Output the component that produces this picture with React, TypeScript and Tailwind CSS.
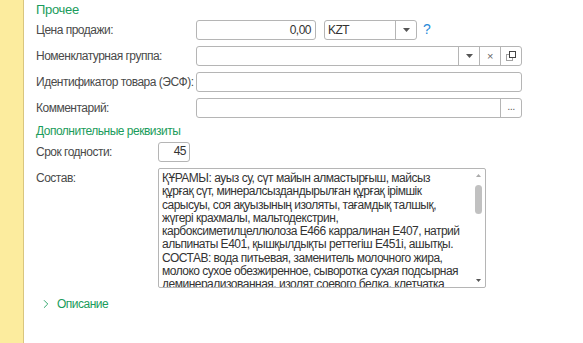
import { ChevronRight } from "lucide-react";

const font = { fontFamily: '"Liberation Sans", Arial, sans-serif' };

function DropArrow() {
  return (
    <svg width="7" height="4" viewBox="0 0 7 4">
      <path d="M0 0h7L3.5 4z" fill="#555" />
    </svg>
  );
}

function Field({ children, className = "" }: { children?: React.ReactNode; className?: string }) {
  return (
    <div className={`flex h-[20px] items-stretch rounded-[3px] border border-[#b5b5b5] bg-white text-[12px] text-[#333] ${className}`}>
      {children}
    </div>
  );
}

function Btn({ children }: { children: React.ReactNode }) {
  return (
    <div className="flex w-[21px] shrink-0 items-center justify-center border-l border-[#b5b5b5] text-[#666]">
      {children}
    </div>
  );
}

const lines = [
  "ҚҰРАМЫ: ауыз су, сүт майын алмастырғыш, майсыз",
  "құрғақ сүт, минералсыздандырылған құрғақ ірімшік",
  "сарысуы, соя ақуызының изоляты, тағамдық талшық,",
  "жүгері крахмалы, мальтодекстрин,",
  "карбоксиметилцеллюлоза Е466 карралинан Е407, натрий",
  "альпинаты Е401, қышқылдықты реттегіш Е451i, ашытқы.",
  "СОСТАВ: вода питьевая, заменитель молочного жира,",
  "молоко сухое обезжиренное, сыворотка сухая подсырная",
  "деминерализованная, изолят соевого белка, клетчатка",
];

export default function App() {
  return (
    <div style={font} className="flex h-[343px] w-[583px] overflow-hidden bg-white">
      {/* yellow side strip */}
      <div className="w-[24px] shrink-0 border-r border-[#d9c67f] bg-[#fcec9e]" />

      <div className="flex flex-1 flex-col pl-[12px] pt-[2px] text-[12px] tracking-[-0.5px] text-[#4a4a4a]">
        <div className="h-[16px] text-[13px] leading-[16px] tracking-[-0.3px] text-[#1a9c5b]">Прочее</div>

        <div className="mt-[1px] flex flex-col gap-[6px]">
          {/* Цена продажи */}
          <div className="flex items-center">
            <div className="w-[160px] shrink-0">Цена продажи:</div>
            <Field className="w-[120px] justify-end pr-[4px] leading-[18px]">0,00</Field>
            <Field className="ml-[8px] w-[93px]">
              <div className="flex-1 pl-[3px] leading-[18px]">KZT</div>
              <Btn>
                <DropArrow />
              </Btn>
            </Field>
            <span className="ml-[6px] text-[14px] text-[#2a8ad8]">?</span>
          </div>

          {/* Номенклатурная группа */}
          <div className="flex items-center">
            <div className="w-[160px] shrink-0">Номенклатурная группа:</div>
            <Field className="w-[326px]">
              <div className="flex-1" />
              <Btn>
                <DropArrow />
              </Btn>
              <Btn>
                <span className="text-[11px] leading-none">×</span>
              </Btn>
              <Btn>
                <svg width="10" height="10" viewBox="0 0 10 10" fill="none" stroke="#444" strokeWidth="1">
                  <rect x="3.5" y="0.5" width="6" height="6" />
                  <path d="M3.5 3.5H0.5V9.5H6.5V6.5" strokeDasharray="1 1" />
                </svg>
              </Btn>
            </Field>
          </div>

          {/* Идентификатор */}
          <div className="flex items-center">
            <div className="w-[160px] shrink-0 whitespace-nowrap">Идентификатор товара (ЭСФ):</div>
            <Field className="w-[326px]" />
          </div>

          {/* Комментарий */}
          <div className="flex items-center">
            <div className="w-[160px] shrink-0">Комментарий:</div>
            <Field className="w-[326px]">
              <div className="flex-1" />
              <Btn>
                <span className="pb-[4px] text-[11px] leading-none">...</span>
              </Btn>
            </Field>
          </div>
        </div>

        <div className="mt-[5px] h-[16px] leading-[16px] text-[#1a9c5b]">Дополнительные реквизиты</div>

        <div className="mt-[3px] flex items-center">
          <div className="w-[122px] shrink-0">Срок годности:</div>
          <Field className="h-[19px] w-[32px] justify-end pr-[3px] leading-[17px]">45</Field>
        </div>

        <div className="mt-[6px] flex">
          <div className="w-[122px] shrink-0 pt-[1px]">Состав:</div>
          <div className="flex h-[120px] w-[328px] rounded-[2px] border border-[#b5b5b5] bg-white">
            <div className="flex-1 overflow-hidden pl-[3px] pt-[3px] text-[12px] leading-[13.3px] text-[#333]">
              {lines.map((l) => (
                <div key={l} className="whitespace-nowrap">
                  {l}
                </div>
              ))}
            </div>
            {/* scrollbar */}
            <div className="flex w-[13px] shrink-0 flex-col items-center pt-[5px] pb-[5px]">
              <svg width="5" height="3" viewBox="0 0 5 3">
                <path d="M0 3h5L2.5 0z" fill="#aaa" />
              </svg>
              <div className="mt-[8px] h-[29px] w-[7px] rounded-[4px] bg-[#c1c1c1]" />
              <div className="flex-1" />
              <svg width="5" height="3" viewBox="0 0 5 3">
                <path d="M0 0h5L2.5 3z" fill="#555" />
              </svg>
            </div>
          </div>
        </div>

        <div className="mt-[7px] flex items-center gap-[4px] pl-[3px] text-[#1a9c5b]">
          <ChevronRight size={14} strokeWidth={1.5} />
          <span>Описание</span>
        </div>
      </div>
    </div>
  );
}
